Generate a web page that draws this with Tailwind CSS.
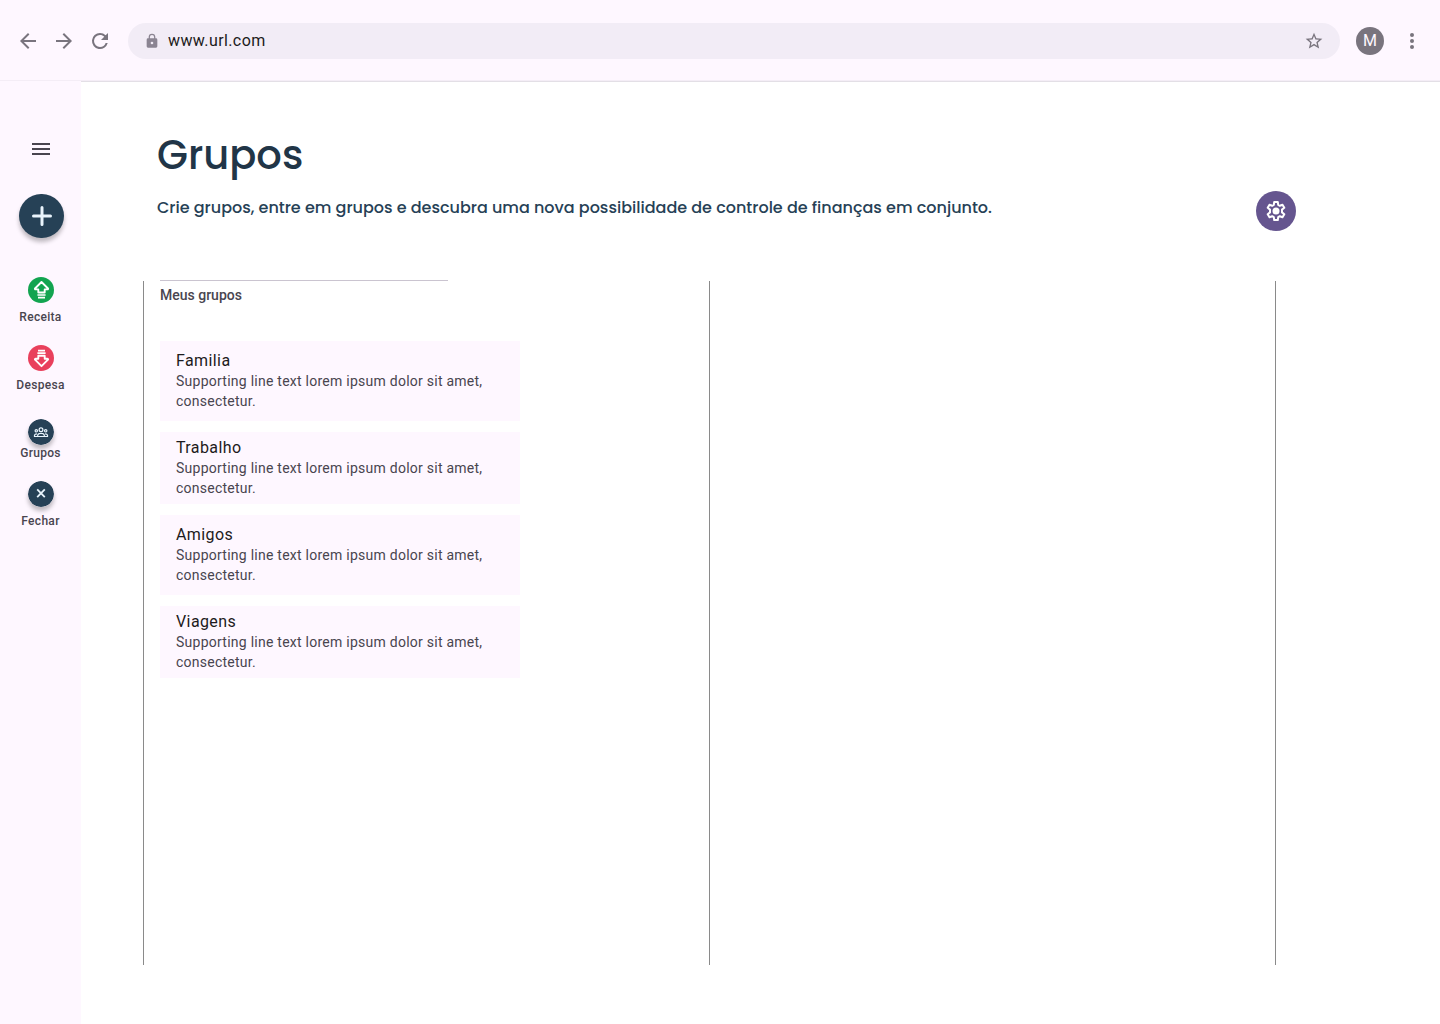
<!DOCTYPE html>
<html lang="pt-BR">
<head>
<meta charset="utf-8">
<title>Grupos</title>
<script src="https://cdn.jsdelivr.net/npm/@tailwindcss/browser@4"></script>
</head>
<body class="flex min-h-screen flex-col bg-white font-['Roboto',sans-serif] text-[#1d1b20]">
  <header class="flex h-[81px] items-center gap-4 border-b border-[#f4edf6] bg-[#fef7ff] px-4 pt-0.5 text-[#79747e]">
    <nav class="flex items-center gap-3" aria-label="Navegador">
      <button type="button" aria-label="Voltar"><svg class="size-6" viewBox="0 0 24 24" fill="currentColor"><path d="M20 11H7.830l5.590-5.590L12 4l-8 8 8 8 1.410-1.410L7.830 13H20v-2z"/></svg></button>
      <button type="button" aria-label="Avançar"><svg class="size-6" viewBox="0 0 24 24" fill="currentColor"><path d="M12 4l-1.410 1.410L16.170 11H4v2h12.170l-5.580 5.590L12 20l8-8-8-8z"/></svg></button>
      <button type="button" aria-label="Recarregar"><svg class="size-6" viewBox="0 0 24 24" fill="currentColor"><path d="M17.650 6.350A7.958 7.958 0 0 0 12 4a8 8 0 1 0 7.730 10h-2.080A5.990 5.990 0 0 1 12 18a6 6 0 1 1 0-12c1.660 0 3.140.690 4.220 1.780L13 11h7V4l-2.350 2.350z"/></svg></button>
    </nav>
    <div class="flex h-9 flex-1 items-center gap-2 rounded-full bg-[#f2ecf6] pl-4 pr-4">
      <svg class="size-4 text-[#8b8492]" viewBox="0 0 24 24" fill="currentColor"><path d="M18 8h-1V6A5 5 0 0 0 7 6v2H6a2 2 0 0 0-2 2v10a2 2 0 0 0 2 2h12a2 2 0 0 0 2-2V10a2 2 0 0 0-2-2zm-6 9a2 2 0 1 1 0-4 2 2 0 0 1 0 4zm3.100-9H8.900V6a3.100 3.100 0 0 1 6.200 0v2z"/></svg>
      <input type="text" aria-label="Endereço" value="www.url.com" class="min-w-0 flex-1 bg-transparent text-base tracking-wide text-[#1d1b20] outline-none">
      <button type="button" aria-label="Favoritar"><svg class="size-5" viewBox="0 0 24 24" fill="currentColor"><path d="M22 9.240l-7.190-.620L12 2 9.190 8.630 2 9.240l5.460 4.730L5.820 21 12 17.270 18.180 21l-1.630-7.030L22 9.240zM12 15.400l-3.760 2.270 1-4.280-3.320-2.880 4.380-.380L12 6.100l1.710 4.040 4.380.380-3.320 2.880 1 4.280L12 15.400z"/></svg></button>
    </div>
    <button type="button" aria-label="Perfil" class="flex size-7 items-center justify-center rounded-full bg-[#79747e] text-base text-[#fef7ff]">M</button>
    <button type="button" aria-label="Mais opções"><svg class="size-6" viewBox="0 0 24 24" fill="currentColor"><circle cx="12" cy="6" r="2"/><circle cx="12" cy="12" r="2"/><circle cx="12" cy="18" r="2"/></svg></button>
  </header>

  <div class="flex flex-1">
    <aside class="flex w-[81px] shrink-0 flex-col items-center bg-[#fef7ff] pt-14 text-[#49454f]">
      <button type="button" aria-label="Menu"><svg class="size-6" viewBox="0 0 24 24" fill="currentColor"><path d="M3 18h18v-2H3v2zm0-5h18v-2H3v2zm0-7v2h18V6H3z"/></svg></button>
      <button type="button" aria-label="Adicionar" class="mt-[33px] ml-0.5 flex h-11 w-[45px] items-center justify-center rounded-full bg-[#264156] text-[#e9f4fc] shadow-[0_4px_4px_rgba(0,0,0,0.25)]"><svg class="size-6" viewBox="0 0 24 24" fill="none" stroke="currentColor" stroke-width="3" stroke-linecap="round"><path d="M12 3.500v17M3.500 12h17"/></svg></button>

      <nav class="mt-[39px] flex flex-col items-center gap-5 text-xs font-medium tracking-wide" aria-label="Principal">
        <a href="#receita" class="flex flex-col items-center gap-[6px]">
          <svg class="ml-0.5 size-[26px]" viewBox="0 0 26 26" fill="none" stroke="#fff"><circle cx="13" cy="13" r="13" fill="#12a450" stroke="none"/><path d="M13.500 5L20 11.500q.4.900-.7.900H16.700V15.500H10.300V12.400H7.700Q6.600 12.400 7 11.500z" stroke-width="1.900" stroke-linejoin="round"/><path d="M9.400 18h8.200M10 20.600h7" stroke-width="1.700"/></svg>
          Receita
        </a>
        <a href="#despesa" class="flex flex-col items-center gap-[6px]">
          <svg class="ml-0.5 size-[26px]" viewBox="0 0 26 26" fill="none" stroke="#fff"><circle cx="13" cy="13" r="13" fill="#e9405c" stroke="none"/><path d="M13.500 21.200L20 14.700q.4-.9-.7-.9H16.700V10.700H10.300V13.800H7.700Q6.600 13.800 7 14.700z" stroke-width="1.900" stroke-linejoin="round"/><path d="M10 5.600h7M9.400 8.200h8.200" stroke-width="1.700"/></svg>
          Despesa
        </a>
        <a href="#grupos" class="mt-[6px] flex flex-col items-center">
          <svg class="ml-0.5 size-[26px] rounded-full shadow-[0_4px_4px_rgba(0,0,0,0.25)]" viewBox="0 0 26 26" fill="none" stroke="#e9f4fc" stroke-width="1.200"><circle cx="13" cy="13" r="13" fill="#264156" stroke="none"/><circle cx="13" cy="10.800" r="1.900"/><circle cx="8.300" cy="11.800" r="1.200"/><circle cx="17.700" cy="11.800" r="1.200"/><path d="M9.700 17.500v-1.300q.4-1.800 3.300-1.800t3.300 1.800v1.300zM9.700 17.500H6.500v-1.400q.3-1.200 2.500-1.200M16.300 17.500h3.200v-1.400q-.3-1.200-2.500-1.200"/></svg>
          Grupos
        </a>
        <a href="#fechar" class="flex flex-col items-center gap-[6px]">
          <svg class="ml-0.5 size-[26px] rounded-full shadow-[0_4px_4px_rgba(0,0,0,0.25)]" viewBox="0 0 26 26" fill="none" stroke="#e9f4fc"><circle cx="13" cy="13" r="13" fill="#264156" stroke="none"/><path d="M9.200 8.400l7.600 7.800M16.800 8.400l-7.600 7.800" stroke-width="1.800"/></svg>
          Fechar
        </a>
      </nav>
    </aside>

    <main class="flex min-w-0 flex-1 flex-col border-t border-[#e3dfe6] pt-[43px] pb-[59px]">
      <div class="flex items-end justify-between pl-19 pr-36">
        <div>
          <h1 class="font-['Poppins',sans-serif] text-[40px] leading-[60px] font-medium text-[#213547]">Grupos</h1>
          <p class="my-[11px] font-['Poppins',sans-serif] text-base leading-6 font-medium text-[#264156]">Crie grupos, entre em grupos e descubra uma nova possibilidade de controle de finanças em conjunto.</p>
        </div>
        <button type="button" aria-label="Configurações" class="flex size-10 items-center justify-center rounded-full bg-[#65558f] text-white"><svg class="size-6" viewBox="0 0 24 24" fill="none" stroke="currentColor" stroke-width="2" stroke-linejoin="round"><path d="M10.200 3h3.600l.4 2.900 1.600.9 2.700-1.100 1.800 3.100-2.300 1.800v2.800l2.300 1.800-1.800 3.100-2.700-1.100-1.600.9-.4 2.900h-3.600l-.4-2.900-1.600-.9-2.700 1.100-1.800-3.100L6 13.400v-2.800L3.700 8.800l1.800-3.100 2.700 1.100 1.600-.9z"/><circle cx="12" cy="12" r="3.500" fill="currentColor" stroke="none"/></svg></button>
      </div>

      <div class="mt-[50px] mr-41 ml-[62px] grid flex-1 grid-cols-2 border-r border-[#8a8a8a]">
        <section class="border-l border-[#8a8a8a] pl-4">
          <h2 class="-mt-px w-72 border-t border-[#cac4d0] pt-1 text-sm leading-5 font-medium text-[#49454f]">Meus grupos</h2>
          <ul class="mt-9 flex w-[360px] flex-col gap-[11px]">
            <li class="bg-[#fef7ff] px-4 py-2.5">
              <h3 class="text-base leading-5 tracking-wide">Familia</h3>
              <p class="text-sm leading-5 tracking-[0.018em] text-[#49454f]">Supporting line text lorem ipsum dolor sit amet, consectetur.</p>
            </li>
            <li class="bg-[#fef7ff] px-4 py-1.5">
              <h3 class="text-base leading-5 tracking-wide">Trabalho</h3>
              <p class="text-sm leading-5 tracking-[0.018em] text-[#49454f]">Supporting line text lorem ipsum dolor sit amet, consectetur.</p>
            </li>
            <li class="bg-[#fef7ff] px-4 py-2.5">
              <h3 class="text-base leading-5 tracking-wide">Amigos</h3>
              <p class="text-sm leading-5 tracking-[0.018em] text-[#49454f]">Supporting line text lorem ipsum dolor sit amet, consectetur.</p>
            </li>
            <li class="bg-[#fef7ff] px-4 py-1.5">
              <h3 class="text-base leading-5 tracking-wide">Viagens</h3>
              <p class="text-sm leading-5 tracking-[0.018em] text-[#49454f]">Supporting line text lorem ipsum dolor sit amet, consectetur.</p>
            </li>
          </ul>
        </section>
        <section class="border-l border-[#8a8a8a]" aria-label="Detalhes do grupo"></section>
      </div>
    </main>
  </div>
</body>
</html>
